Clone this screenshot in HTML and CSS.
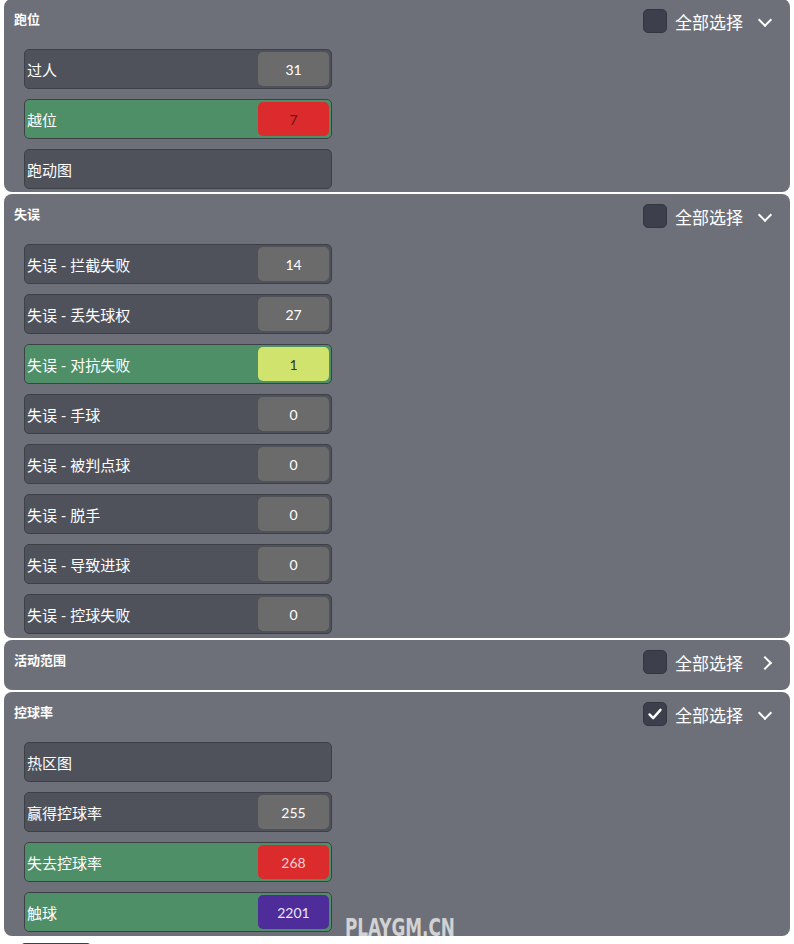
FILE: index.html
```html
<!DOCTYPE html>
<html lang="zh">
<head>
    <meta charset="UTF-8" />
    <title>统计筛选</title>
    <link rel="stylesheet" href="styles.css">
</head>
<body>
    <div class="panels">
        <div class="panel first">
            <div class="panel-header">
                <div class="panel-title">跑位</div>
                <label class="select-all"><span class="box"></span>全部选择</label>
                <span class="chevron down"></span>
            </div>
            <div class="rows">
                <div class="row"><span class="name">过人</span><span class="value">31</span></div>
                <div class="row active"><span class="name">越位</span><span class="value red dark-text">7</span></div>
                <div class="row"><span class="name">跑动图</span></div>
            </div>
        </div>

        <div class="panel">
            <div class="panel-header">
                <div class="panel-title">失误</div>
                <label class="select-all"><span class="box"></span>全部选择</label>
                <span class="chevron down"></span>
            </div>
            <div class="rows">
                <div class="row"><span class="name">失误 - 拦截失败</span><span class="value">14</span></div>
                <div class="row"><span class="name">失误 - 丢失球权</span><span class="value">27</span></div>
                <div class="row active"><span class="name">失误 - 对抗失败</span><span class="value lime">1</span></div>
                <div class="row"><span class="name">失误 - 手球</span><span class="value">0</span></div>
                <div class="row"><span class="name">失误 - 被判点球</span><span class="value">0</span></div>
                <div class="row"><span class="name">失误 - 脱手</span><span class="value">0</span></div>
                <div class="row"><span class="name">失误 - 导致进球</span><span class="value">0</span></div>
                <div class="row"><span class="name">失误 - 控球失败</span><span class="value">0</span></div>
            </div>
        </div>

        <div class="panel collapsed">
            <div class="panel-header">
                <div class="panel-title">活动范围</div>
                <label class="select-all"><span class="box"></span>全部选择</label>
                <span class="chevron right"></span>
            </div>
        </div>

        <div class="panel">
            <div class="panel-header">
                <div class="panel-title">控球率</div>
                <label class="select-all"><span class="box checked"><svg viewBox="0 0 24 24" width="24" height="24"><path d="M6 12.5l4 4 8-9" fill="none" stroke="#fff" stroke-width="2.6" stroke-linecap="round" stroke-linejoin="round"/></svg></span>全部选择</label>
                <span class="chevron down"></span>
            </div>
            <div class="rows">
                <div class="row"><span class="name">热区图</span></div>
                <div class="row"><span class="name">赢得控球率</span><span class="value">255</span></div>
                <div class="row active"><span class="name">失去控球率</span><span class="value red">268</span></div>
                <div class="row active"><span class="name">触球</span><span class="value purple">2201</span></div>
            </div>
        </div>
    </div>

    <div class="footer">
        <button class="apply"></button>
    </div>

    <div class="watermark">PLAYGM.CN</div>
</body>
</html>
```

FILE: styles.css
```css
body {
    margin: 0;
    background: #ffffff;
    font-family: Lato, "Noto Sans CJK SC", sans-serif;
    color: #ffffff;
    overflow: hidden;
}
.panels {
    display: flex;
    flex-direction: column;
    gap: 2px;
    padding: 0 4px;
    margin-top: -1px;
}
.panel {
    background: #6d7078;
    border-radius: 8px;
    padding-bottom: 4px;
}
.panel.first {
    padding-bottom: 3px;
}
.panel.collapsed {
    padding-bottom: 6px;
}
.panel-header {
    display: flex;
    align-items: center;
    height: 44px;
    padding: 0 16px 0 10px;
}
.panel-title {
    flex: 1;
    font-size: 13px;
    font-weight: bold;
    margin-top: -5px;
}
.select-all {
    display: flex;
    align-items: center;
    gap: 8px;
    font-size: 17px;
}
.box {
    width: 24px;
    height: 24px;
    box-sizing: border-box;
    background: #3d3f4d;
    border: 1px solid #33353f;
    border-radius: 5px;
    display: flex;
    align-items: center;
    justify-content: center;
}
.box svg {
    display: block;
}
.chevron {
    width: 8px;
    height: 8px;
    border-right: 2.5px solid #ffffff;
    border-bottom: 2.5px solid #ffffff;
    margin-left: 17px;
    margin-right: 4px;
}
.chevron.down {
    transform: rotate(45deg);
    margin-top: -2px;
}
.chevron.right {
    transform: rotate(-45deg);
    margin-top: 2px;
}
.rows {
    display: flex;
    flex-direction: column;
    gap: 10px;
    padding: 6px 0 0 20px;
}
.row {
    width: 308px;
    height: 40px;
    box-sizing: border-box;
    background: #50525b;
    border: 1px solid #3e4048;
    border-radius: 5px;
    display: flex;
    align-items: center;
    padding: 2px;
}
.row.active {
    background: #4f8f68;
}
.name {
    flex: 1;
    font-size: 15px;
}
.value {
    width: 71px;
    height: 100%;
    background: #6b6b6b;
    border-radius: 5px;
    display: flex;
    align-items: center;
    justify-content: center;
    font-size: 14px;
}
.value.red {
    background: #dc2b2d;
    color: #f4d2d2;
}
.value.red.dark-text {
    color: #6e1214;
}
.value.lime {
    background: #cfe36d;
    color: #333333;
}
.value.purple {
    background: #4e2c99;
    color: #ece6ff;
}
.footer {
    padding: 7px 0 0 20px;
}
.apply {
    width: 72px;
    height: 32px;
    background: #50525b;
    border: 1px solid #3e4048;
    border-radius: 5px;
}
.watermark {
    position: absolute;
    left: 345px;
    top: 914px;
    font-family: "DejaVu Sans Condensed", sans-serif;
    font-weight: bold;
    font-size: 24px;
    color: #d2d2d2;
    transform: scaleX(0.78);
    transform-origin: left top;
}
```
